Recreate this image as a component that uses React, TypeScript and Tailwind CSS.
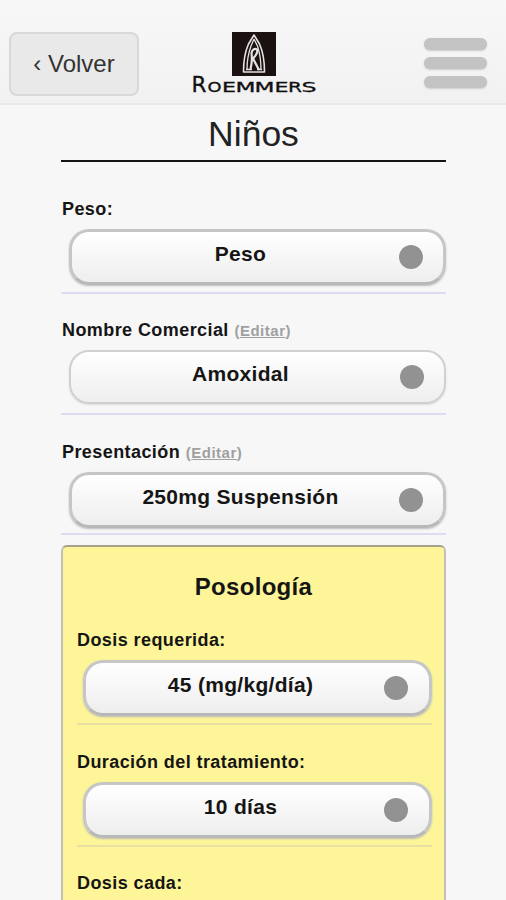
import clsx from 'clsx'

type FieldProps = {
  label: string
  value?: string
  editable?: boolean
  flat?: boolean
  inPanel?: boolean
  className?: string
}

const WORDMARK = [
  { char: 'R', x: 0.5, width: 15, size: 21.5 },
  { char: 'O', x: 16.5, width: 14, size: 14 },
  { char: 'E', x: 31, width: 14, size: 14 },
  { char: 'M', x: 44.5, width: 20, size: 14 },
  { char: 'M', x: 63.5, width: 20, size: 14 },
  { char: 'E', x: 83.5, width: 14, size: 14 },
  { char: 'R', x: 97, width: 14, size: 14 },
  { char: 'S', x: 110.5, width: 15, size: 14 },
]

function Logo() {
  return (
    <svg width="126" height="66" viewBox="0 0 126 66" className="block">
      <rect x="41" y="2" width="44" height="44" fill="#1b1110" />
      <g fill="none" stroke="#e6e4e3" strokeLinejoin="round">
        <path d="M63 5 57.500 14Q52.500 25 52.500 42H73.500Q73.500 25 68.500 14Z" strokeWidth="1.600" />
        <path d="M63 9 60 16Q56 27 56 39.500M63 9 66.500 16Q70 27 70 39.500M55 39.500H61M66 39.500H71" strokeWidth="1.300" />
        <path d="M59.500 39Q61.500 32 60.500 23Q62 17.500 66 19.500Q67.500 23 62 28.500L68 40" strokeWidth="2.200" />
      </g>
      <g fill="#111" stroke="#111" strokeWidth="0.300" fontFamily="'DejaVu Sans', sans-serif">
        {WORDMARK.map(({ char, x, width, size }) => (
          <text key={x} x={x} y="62" fontSize={size} textLength={width} lengthAdjust="spacingAndGlyphs">
            {char}
          </text>
        ))}
      </g>
    </svg>
  )
}

function Header() {
  return (
    <header className="flex h-[105px] border-b-2 border-[#e8e8e8] bg-gradient-to-b from-[#f8f8f8] to-[#f1f1f1] pl-[9px]">
      <button className="mt-8 h-16 w-[130px] rounded-lg border-2 border-[#d8d8d8] bg-[#e9e9e9] text-2xl text-[#333]">
        ‹ Volver
      </button>
      <div className="mt-[30px] ml-[52px]">
        <Logo />
      </div>
      <div className="mt-[38px] ml-[107px] flex w-[63px] flex-col gap-[7px]">
        <span className="h-3 rounded-full bg-[#c3c3c3] shadow-[0_1px_2px_#ccc]" />
        <span className="h-3 rounded-full bg-[#c3c3c3] shadow-[0_1px_2px_#ccc]" />
        <span className="h-3 rounded-full bg-[#c3c3c3] shadow-[0_1px_2px_#ccc]" />
      </div>
    </header>
  )
}

function Field({ label, value, editable, flat, inPanel, className }: FieldProps) {
  return (
    <div className={clsx('border-b-2', inPanel ? 'border-[#e9dfa0]' : 'border-[#dddcf5]', className)}>
      <div className={clsx('h-6 text-[18px] leading-6 font-bold tracking-[0.42px] whitespace-nowrap', !inPanel && 'pl-px')}>
        {label}
        {editable && (
          <span className="ml-px text-[15px] tracking-[0.5px] text-[#a0a0a0]">
            {' '}(<a className="underline">Editar</a>)
          </span>
        )}
      </div>
      {value && (
        <button
          className={clsx(
            'relative block rounded-[20px] bg-gradient-to-b from-white to-[#eee] text-center text-[21px] leading-6 font-bold tracking-[0.3px]',
            inPanel ? 'ml-[6px] w-[349px] pr-[34px]' : 'ml-[8px] w-[377px] pr-[34px]',
            flat
              ? 'mt-[8px] h-[54px] border-2 border-[#d0d0d0] pb-1.5 shadow-[0_1px_2px_#ddd]'
              : 'mt-[8px] h-[56px] border-3 border-[#c6c6c6] border-b-[#b8b8b8] pb-1.5 shadow-[0_1px_2px_#bbb]',
          )}
        >
          {value}
          <span
            className={clsx(
              'absolute size-6 rounded-full bg-[#929292]',
              flat ? 'top-[13px] right-5' : inPanel ? 'top-[13px] right-[21px]' : 'top-[13px] right-[20px]',
            )}
          />
        </button>
      )}
    </div>
  )
}

export default function App() {
  return (
    <div className="h-[900px] w-[506px] overflow-hidden bg-[#f7f7f7] font-['Liberation_Sans',Arial,sans-serif] text-[#151515]">
      <Header />
      <main className="ml-[61px] w-[385px]">
        <h1 className="h-[57px] border-b-2 border-[#151515] pt-2 text-center text-[35.500px] leading-[42px] text-[#222]">
          Niños
        </h1>
        <Field label="Peso:" value="Peso" className="h-[132px] pt-[35px]" />
        <Field label="Nombre Comercial" value="Amoxidal" editable flat className="h-[121px] pt-[24px]" />
        <Field label="Presentación" value="250mg Suspensión" editable className="h-[120px] pt-[25px]" />
        <section className="mt-[10px] h-[380px] rounded-t-md border-2 border-[#c4bfb5] border-t-[#a5a28a] bg-[#fdf598] pr-[12px] pl-[14px]">
          <h2 className="pt-[25px] pr-[2px] text-center text-2xl leading-[30px] font-bold tracking-[0.3px]">Posología</h2>
          <Field inPanel label="Dosis requerida:" value="45 (mg/kg/día)" className="h-[123px] pt-[26px]" />
          <Field inPanel label="Duración del tratamiento:" value="10 días" className="h-[122px] pt-[25px]" />
          <Field inPanel label="Dosis cada:" className="h-[122px] pt-[24px]" />
        </section>
      </main>
    </div>
  )
}
